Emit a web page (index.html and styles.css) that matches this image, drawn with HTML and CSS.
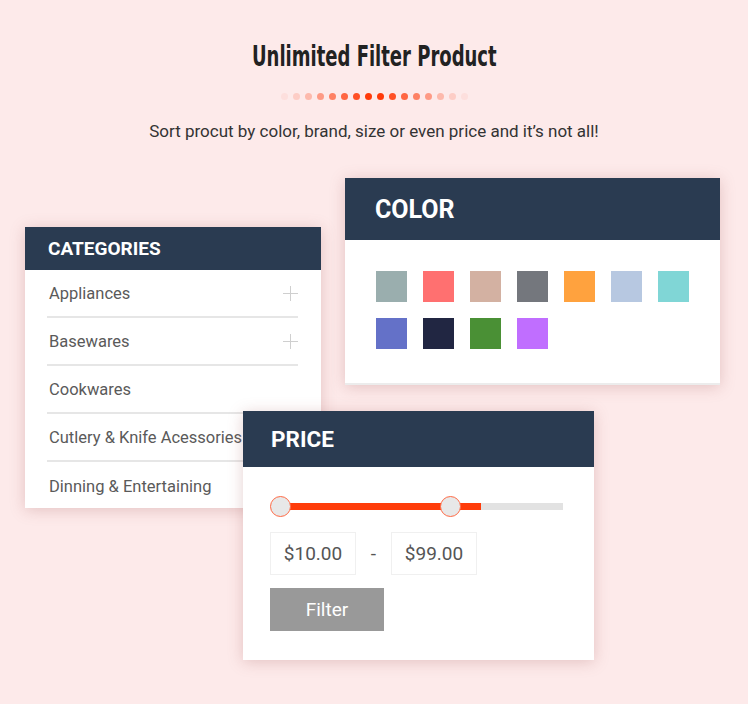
FILE: index.html
```html
<!DOCTYPE html>
<html>
<head>
<meta charset="utf-8">
<link rel="stylesheet" href="styles.css">
</head>
<body>
<div class="page">
  <header class="intro">
    <h1 class="title">Unlimited Filter Product</h1>
    <div class="dots">
      <span class="dot d1"></span><span class="dot d2"></span><span class="dot d3"></span><span class="dot d4"></span>
      <span class="dot d5"></span><span class="dot d6"></span><span class="dot d7"></span><span class="dot d8"></span>
      <span class="dot d8"></span><span class="dot d7"></span><span class="dot d6"></span><span class="dot d5"></span>
      <span class="dot d4"></span><span class="dot d3"></span><span class="dot d2"></span><span class="dot d1"></span>
    </div>
    <p class="subtitle">Sort procut by color, brand, size or even price and it’s not all!</p>
  </header>

  <div class="canvas">
    <section class="card categories">
      <div class="card-head"><h2>CATEGORIES</h2></div>
      <ul class="cat-list">
        <li><span>Appliances</span><span class="plus"></span></li>
        <li><span>Basewares</span><span class="plus"></span></li>
        <li><span>Cookwares</span></li>
        <li><span>Cutlery &amp; Knife Acessories</span></li>
        <li><span>Dinning &amp; Entertaining</span></li>
      </ul>
    </section>

    <section class="card color">
      <div class="card-head"><h2>COLOR</h2></div>
      <div class="swatches">
        <span class="sw s1"></span><span class="sw s2"></span><span class="sw s3"></span><span class="sw s4"></span>
        <span class="sw s5"></span><span class="sw s6"></span><span class="sw s7"></span><span class="sw s8"></span>
        <span class="sw s9"></span><span class="sw s10"></span><span class="sw s11"></span>
      </div>
    </section>

    <section class="card price">
      <div class="card-head"><h2>PRICE</h2></div>
      <div class="price-body">
        <div class="slider">
          <div class="track"><div class="fill"></div></div>
          <span class="handle h-left"></span>
          <span class="handle h-right"></span>
        </div>
        <div class="range">
          <span class="val">$10.00</span>
          <span class="dash">-</span>
          <span class="val">$99.00</span>
        </div>
        <button class="filter-btn">Filter</button>
      </div>
    </section>
  </div>
</div>
</body>
</html>
```
FILE: styles.css
```css
* { box-sizing: border-box; }
html, body { margin: 0; padding: 0; }
body {
  background: #fdeaea;
  font-family: Roboto, "Liberation Sans", sans-serif;
  width: 748px;
  height: 704px;
  overflow: hidden;
}
.page { width: 748px; }
.intro {
  display: flex;
  flex-direction: column;
  align-items: center;
  padding-top: 38px;
}
.title {
  margin: 0;
  font-family: "DejaVu Sans Condensed", "Liberation Sans Narrow", sans-serif;
  font-weight: 700;
  font-size: 29px;
  line-height: 36px;
  color: #222;
  transform: scaleX(0.69);
}
.dots {
  display: flex;
  gap: 5px;
  margin-top: 19px;
  height: 7px;
}
.dot {
  width: 7px; height: 7px; border-radius: 50%;
  background: #ff3a0a;
}
.d1 { opacity: 0.06; }
.d2 { opacity: 0.16; }
.d3 { opacity: 0.28; }
.d4 { opacity: 0.45; }
.d5 { opacity: 0.6; }
.d6 { opacity: 0.75; }
.d7 { opacity: 0.88; }
.d8 { opacity: 1; }
.subtitle {
  margin: 19px 0 0;
  font-size: 17px;
  line-height: 24px;
  color: #333;
}
.canvas {
  position: relative;
  height: 560px;
  margin-top: 1px;
}
.card {
  position: absolute;
  background: #fff;
  box-shadow: 0 2px 14px rgba(160, 90, 90, 0.28);
}
.card-head {
  background: #2a3b51;
  display: flex;
  align-items: center;
}
.card-head h2 {
  margin: 0;
  color: #fff;
  font-weight: 700;
}
.categories {
  left: 25px; top: 83px;
  width: 296px; height: 281px;
}
.categories .card-head { height: 43px; padding-left: 23px; }
.categories .card-head h2 { font-size: 19px; }
.cat-list {
  list-style: none;
  margin: 0;
  padding: 0 23px 0 22px;
}
.cat-list li {
  height: 48px;
  display: flex;
  align-items: center;
  justify-content: space-between;
  border-bottom: 2px solid #e6e6e6;
  font-size: 16.5px;
  color: #5a5a5a;
  white-space: nowrap;
  padding-left: 2px;
}
.cat-list li:last-child { border-bottom: none; }
.plus {
  width: 15px; height: 15px; position: relative; margin-right: 0;
}
.plus::before, .plus::after {
  content: ""; position: absolute; background: #cfcfcf;
}
.plus::before { left: 7px; top: 0; width: 1px; height: 15px; }
.plus::after { top: 7px; left: 0; height: 1px; width: 15px; }

.color {
  left: 345px; top: 34px;
  width: 375px; height: 207px;
  border-bottom: 2px solid #ececec;
}
.color .card-head { height: 62px; padding-left: 30px; }
.color .card-head h2 { font-size: 25px; }
.swatches {
  display: grid;
  grid-template-columns: repeat(7, 31px);
  column-gap: 16px;
  row-gap: 16px;
  padding: 31px 0 0 31px;
}
.sw { width: 31px; height: 31px; }
.s1 { background: #9aaeae; }
.s2 { background: #ff7070; }
.s3 { background: #d3b1a2; }
.s4 { background: #74777d; }
.s5 { background: #ffa23e; }
.s6 { background: #b7c8e1; }
.s7 { background: #80d6d6; }
.s8 { background: #6471c8; }
.s9 { background: #212642; }
.s10 { background: #4a9035; }
.s11 { background: #c06eff; }

.price {
  left: 243px; top: 267px;
  width: 351px; height: 249px;
}
.price .card-head { height: 56px; padding-left: 28px; }
.price .card-head h2 { font-size: 22.5px; }
.price-body { padding: 28px 31px 0 27px; }
.slider {
  position: relative;
  height: 22px;
}
.track {
  position: absolute; left: 1px; right: 0; top: 8px;
  height: 7px; background: #e2e2e2;
}
.fill {
  width: 210px; height: 100%; background: #ff3c0a;
}
.handle {
  position: absolute; top: 1px;
  width: 21px; height: 21px; border-radius: 50%;
  background: #e8e8e8;
  border: 1px solid #ff6a45;
}
.h-left { left: 0; }
.h-right { left: 170px; }
.range {
  display: flex;
  align-items: center;
  margin-top: 15px;
}
.val {
  width: 86px; height: 43px;
  border: 1px solid #f0f0f0;
  display: flex; align-items: center; justify-content: center;
  font-size: 19px; color: #555;
}
.dash {
  width: 35px; text-align: center; font-size: 19px; color: #555;
}
.filter-btn {
  margin-top: 13px;
  width: 114px; height: 43px;
  border: none;
  background: #999;
  color: #fff;
  font-family: Roboto, "Liberation Sans", sans-serif;
  font-size: 19px;
  padding: 0;
}
```
